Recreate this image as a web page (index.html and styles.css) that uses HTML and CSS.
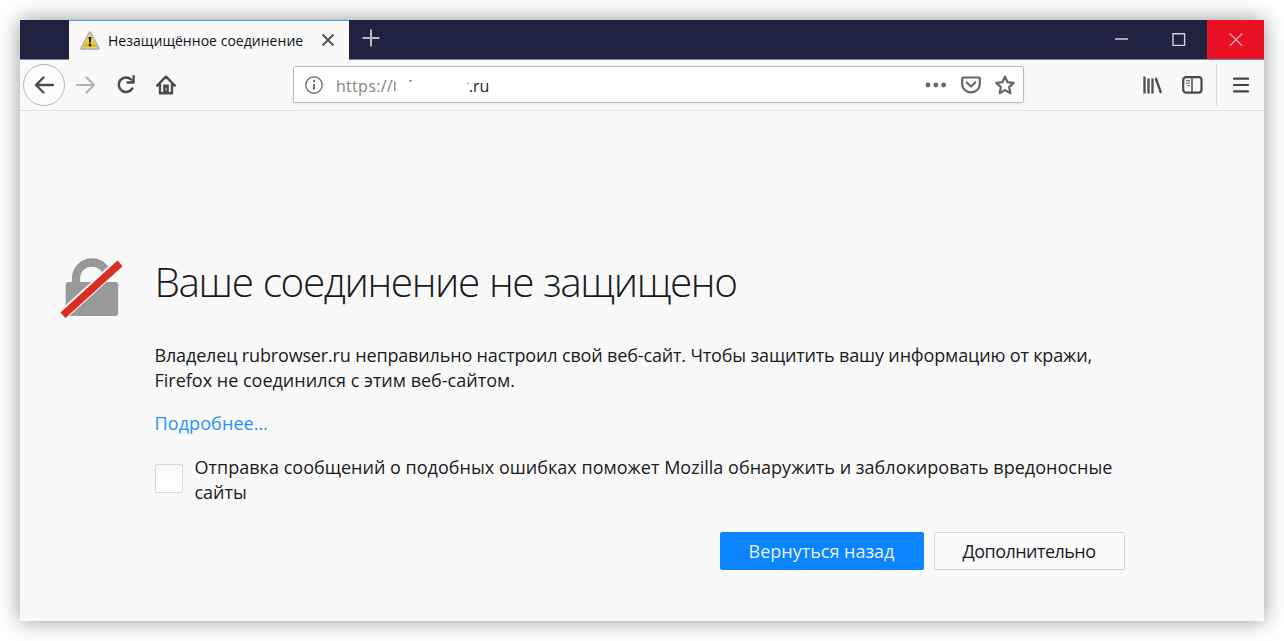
FILE: index.html
```html
<!DOCTYPE html>
<html lang="ru">
<head>
<meta charset="utf-8">
<title>Незащищённое соединение</title>
<link rel="stylesheet" href="styles.css">
</head>
<body>
<div class="window">
  <header class="titlebar">
    <div class="tab">
      <svg class="tab-icon" width="20" height="19" viewBox="0 0 20 19"><defs><linearGradient id="warn" x1="0" y1="0" x2="0" y2="1"><stop offset="0" stop-color="#fff27a"/><stop offset=".5" stop-color="#f5d920"/><stop offset="1" stop-color="#d9ae0c"/></linearGradient></defs><path d="M10 1.600 18.400 17.400H1.600Z" fill="#aaa" stroke="#aaa" stroke-width="2.600" stroke-linejoin="round"/><path d="M10 2.500 17.500 16.800H2.500Z" fill="#ddd" stroke="#ddd" stroke-width="1" stroke-linejoin="round"/><path d="M10 3.500 16.900 16H3.100Z" fill="url(#warn)" stroke="#e0c224" stroke-width=".8" stroke-linejoin="round"/><path d="M8.600 6h2.800l-.6 5.800H9.200Z" fill="#171717"/><circle cx="10" cy="14" r="1.400" fill="#171717"/></svg>
      <span class="tab-title">Незащищённое соединение</span>
      <svg class="tab-close" width="14" height="14" viewBox="0 0 14 14"><path d="M1.500 1.500l11 11M12.500 1.500l-11 11" stroke="#555" stroke-width="2"/></svg>
    </div>
    <svg class="new-tab" width="18" height="18" viewBox="0 0 18 18"><path d="M9 .5v17M.5 9h17" stroke="#b9bac5" stroke-width="2"/></svg>
    <div class="controls">
      <span class="control"><svg width="14" height="14" viewBox="0 0 14 14"><path d="M0 6h13" stroke="#c9c9cf" stroke-width="1.600"/></svg></span>
      <span class="control"><svg width="14" height="14" viewBox="0 0 14 14"><path d="M1 .8h11.600v11.600H1z" fill="none" stroke="#d0d0d6" stroke-width="1.400"/></svg></span>
      <span class="control close"><svg width="14" height="14" viewBox="0 0 14 14"><path d="M.8.5l12.400 12.400M13.200.5.8 12.900" stroke="#f7b8bd" stroke-width="1.200"/></svg></span>
    </div>
  </header>
  <nav class="toolbar">
    <span class="back"><svg width="20" height="18" viewBox="0 0 20 18"><path d="M19 9H2M9.500 1.500 2 9l7.500 7.500" fill="none" stroke="#4b4b4b" stroke-width="2.300" stroke-linecap="round" stroke-linejoin="round"/></svg></span>
    <svg class="forward" width="20" height="18" viewBox="0 0 20 18"><path d="M1 9h17M10.500 1.500 18 9l-7.500 7.500" fill="none" stroke="#b3b3b3" stroke-width="2.200" stroke-linecap="round" stroke-linejoin="round"/></svg>
    <svg class="reload" width="20" height="19" viewBox="0 0 20 19"><path d="M16.300 13.500A7.300 7.300 0 1 1 15 4.300" fill="none" stroke="#4b4b4b" stroke-width="2.500" stroke-linecap="round"/><path d="M17.600 1v6.500H11.500" fill="none" stroke="#4b4b4b" stroke-width="2.300" stroke-linecap="round" stroke-linejoin="round"/><path d="M17.600 4v3.500H14Z" fill="#4b4b4b"/></svg>
    <svg class="home" width="20" height="20" viewBox="0 0 20 20"><path d="M1.200 10.700 10 1.500l8.800 9.200M4 9v9.200h12V9" fill="none" stroke="#4b4b4b" stroke-width="2.400" stroke-linecap="round" stroke-linejoin="round"/><path d="M7.200 17V9.500h5.600V17" fill="#4b4b4b"/><path d="M9.200 13h1.800v2.500H9.200Z" fill="#999"/></svg>
    <div class="address">
      <svg class="info" width="18" height="18" viewBox="0 0 18 18"><circle cx="9" cy="9" r="8.200" fill="none" stroke="#737373" stroke-width="1.400"/><path d="M9 8v5.500" stroke="#737373" stroke-width="2"/><circle cx="9" cy="5" r="1.200" fill="#737373"/></svg>
      <span class="scheme">https://</span>
      <svg class="erased" width="75" height="18" viewBox="0 0 75 18"><path d="M.8 6v9" stroke="#93614f" stroke-width="1.200"/><path d="M15.500 4.800h2" stroke="#555a74" stroke-width="1.500"/><path d="M73.500 7.500H75" stroke="#8daac2" stroke-width="1.500"/></svg>
      <span class="host">.ru</span>
      <div class="page-actions">
        <svg width="22" height="6" viewBox="0 0 22 6"><g fill="#666"><circle cx="3" cy="3" r="2.400"/><circle cx="10.800" cy="3" r="2.400"/><circle cx="18.600" cy="3" r="2.400"/></g></svg>
        <svg width="20" height="18" viewBox="0 0 20 18"><path d="M2.200 1.500h15.600q1 0 1 1V8a8.800 8.400 0 0 1-17.600 0V2.500q0-1 1-1Z" fill="none" stroke="#666" stroke-width="2.200"/><path d="M5.800 6.500 10 10.500l4.200-4" fill="none" stroke="#666" stroke-width="2.200" stroke-linecap="round" stroke-linejoin="round"/></svg>
        <svg width="20" height="20" viewBox="0 0 20 20"><path d="m10 1.600 2.500 5.600 6.200.7-4.600 4.200 1.300 6.100-5.400-3.100-5.400 3.100 1.300-6.100-4.600-4.200 6.200-.7Z" fill="none" stroke="#666" stroke-width="2.200" stroke-linejoin="round"/></svg>
      </div>
    </div>
    <svg class="library" width="20" height="18" viewBox="0 0 20 18"><path d="M1.500.5v17M5.500 2.500v15M9.500 2.500v15M12.700 2l5.300 15" fill="none" stroke="#4f4f4f" stroke-width="2.300"/></svg>
    <svg class="sidebar" width="21" height="18" viewBox="0 0 21 18"><rect x="1.200" y="1.200" width="18.300" height="15.400" rx="2.800" fill="none" stroke="#4b4b4b" stroke-width="2.200"/><path d="M10 1.500v15" stroke="#4b4b4b" stroke-width="1.500"/><path d="M4 4.700h4M4 7.200h4M5.500 9.700h2.500" stroke="#777" stroke-width="1.200"/></svg>
    <span class="divider"></span>
    <svg class="menu" width="16" height="16" viewBox="0 0 16 16"><path d="M1 1.700h14M1 8h14M1 14.300h14" stroke="#454545" stroke-width="2.200" stroke-linecap="round"/></svg>
  </nav>
  <main class="page">
    <svg class="lock" width="64" height="62" viewBox="0 0 64 62"><path d="M16 27V20.500a16 16 0 0 1 32 0V27" fill="none" stroke="#999" stroke-width="8.300"/><path d="M36 24.300 60 2V24.300Z" fill="#f9f9f9"/><rect x="5.700" y="24" width="52.500" height="34" rx="3" fill="#999"/><path d="m1 58.500 60-54.500" stroke="#f9f9f9" stroke-width="10.500"/><path d="m3 57.200 57-51.800" stroke="#dc2d23" stroke-width="7.500"/></svg>
    <div class="content">
      <h1>Ваше соединение не защищено</h1>
      <p class="description"><span class="line1">Владелец rubrowser.ru неправильно настроил свой веб-сайт. Чтобы защитить вашу информацию от кражи,</span><br><span>Firefox не соединился с этим веб-сайтом.</span></p>
      <a class="more">Подробнее…</a>
      <div class="report">
        <span class="checkbox"></span>
        <p><span class="line3">Отправка сообщений о подобных ошибках поможет Mozilla обнаружить и заблокировать вредоносные</span><br><span>сайты</span></p>
      </div>
      <div class="buttons">
        <button class="primary">Вернуться назад</button>
        <button class="secondary">Дополнительно</button>
      </div>
    </div>
  </main>
</div>
</body>
</html>
```
FILE: styles.css
```css
* { box-sizing: border-box; }
body { margin: 0; padding: 20px; background: #fff; overflow: hidden; font-family: "Open Sans", "Noto Sans", sans-serif; }
svg { display: block; flex: none; }
.window { width: 1244px; height: 601px; background: #f9f9f9; box-shadow: 0 0 20px rgba(0,0,0,.42); }
.titlebar { display: flex; height: 40px; background: #202340; border-bottom: 1px solid #85869a; }
.tab { display: flex; align-items: center; width: 280px; height: 40px; margin-left: 49px; padding: 0 0 1px 11px; background: #f9f9f9; border-top: 1px solid #3fa0f8; }
.tab-title { width: 196px; margin-left: 8px; font-size: 14px; color: #101020; white-space: nowrap; letter-spacing: .03px; }
.tab-close { margin-left: 17px; }
.new-tab { margin: 9px 0 0 13px; }
.controls { display: flex; margin-left: auto; }
.control { display: flex; width: 57px; height: 39px; align-items: center; justify-content: center; }
.close { background: #e81123; }
.toolbar { display: flex; align-items: center; height: 51px; padding: 0 0 1px 3px; border-bottom: 1px solid #e1e1e1; }
.back { display: flex; align-items: center; justify-content: center; width: 42px; height: 42px; border: 1px solid #b5b5b5; border-radius: 50%; background: #fdfdfd; }
.forward { margin-left: 11px; }
.reload { margin-left: 20px; }
.home { margin-left: 20px; }
.address { display: flex; align-items: center; width: 731px; height: 37px; margin-left: 117px; padding-left: 11px; background: #fff; border: 1px solid #bcbcbc; border-radius: 2px; box-shadow: 0 1px 2px rgba(0,0,0,.08); }
.scheme, .host { padding-top: 2px; font-size: 16px; white-space: nowrap; }
.scheme { width: 58px; margin-left: 13px; color: #858585; letter-spacing: .3px; }
.host { color: #1b1b29; letter-spacing: -.1px; }
.page-actions { display: flex; align-items: center; gap: 14px; margin-left: auto; padding-right: 8px; }
.library { margin-left: 119px; }
.sidebar { margin-left: 19px; }
.divider { width: 1px; height: 42px; margin-left: 13px; background: #dedede; }
.menu { margin-left: 16px; }
.page { display: flex; padding: 147px 0 0 40px; }
.content { width: 970px; margin-left: 30.5px; color: #1a1a22; font-size: 18px; line-height: 25px; }
h1 { margin: -1px 0 0; font-size: 40.5px; line-height: 50px; font-weight: 300; white-space: nowrap; letter-spacing: -1.38px; word-spacing: 1px; }
p { margin: 0; white-space: nowrap; }
.description { margin-top: 36px; }
.line1 { letter-spacing: -.155px; }
.line3 { letter-spacing: .02px; }
.more { display: block; margin-top: 18px; color: #2493ff; letter-spacing: .1px; }
.report { display: flex; margin-top: 19px; }
.report p { margin-left: 12px; }
.checkbox { width: 28px; height: 29px; margin-top: 9px; border: 1px solid #d9d9db; border-radius: 2px; background: linear-gradient(#f9f9f9, #fff 70%); }
.buttons { display: flex; justify-content: flex-end; gap: 10px; margin-top: 26.5px; }
button { height: 38px; padding: 0; border-radius: 2px; font: 18px "Open Sans", sans-serif; white-space: nowrap; }
.primary { width: 204px; border: 0; background: #0a84ff; color: #e7f2ff; }
.secondary { width: 191px; border: 1px solid #d5d5d8; background: #fbfbfb; color: #1a1a22; letter-spacing: -.55px; }
```
